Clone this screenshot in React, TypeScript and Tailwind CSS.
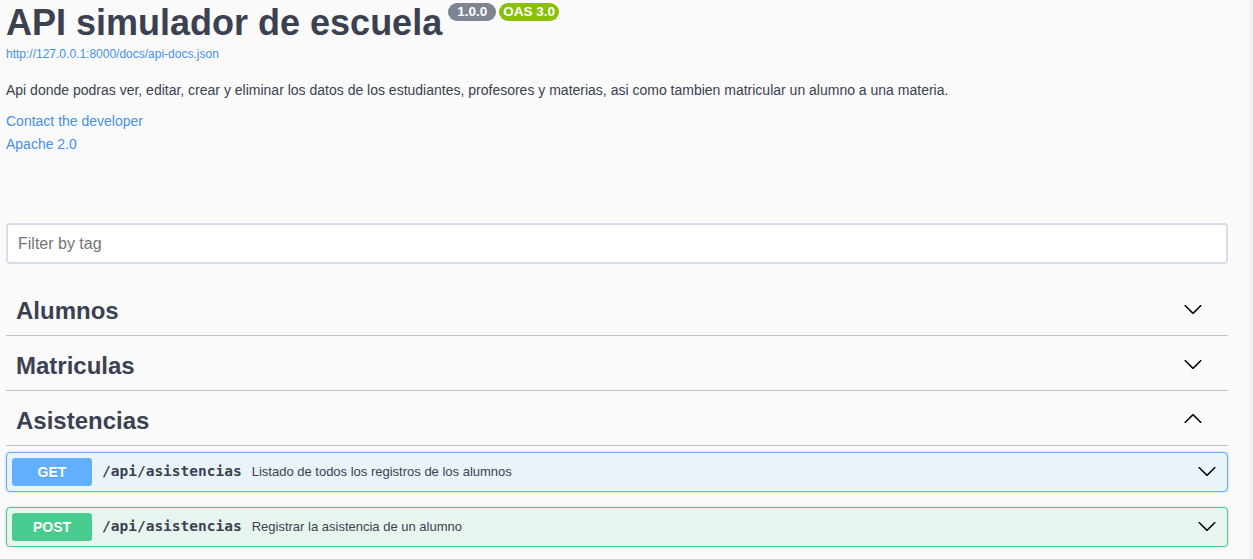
import React from "react";

const Chevron = ({ up = false, className = "" }: { up?: boolean; className?: string }) => (
  <svg
    width="20"
    height="20"
    viewBox="0 0 20 20"
    className={className}
    style={up ? { transform: "rotate(180deg)" } : undefined}
    aria-hidden
  >
    <path
      fill="#000"
      d="M17.418 6.109c.272-.268.709-.268.979 0s.271.701 0 .969l-7.908 7.83c-.27.268-.707.268-.979 0l-7.908-7.83c-.27-.268-.27-.701 0-.969.271-.268.709-.268.979 0L10 13.25l7.418-7.141z"
    />
  </svg>
);

const TagRow = ({ name, open = false }: { name: string; open?: boolean }) => (
  <div className="flex h-[50px] items-center justify-between border-b border-[#c1c3c6] pl-[10px] pr-[25px] mb-[5px]">
    <h3 className="text-[24px] leading-[29px] font-bold text-[#3b4151]">{name}</h3>
    <Chevron up={open} className="-mt-[3px]" />
  </div>
);

const OpRow = ({
  method,
  path,
  desc,
  badge,
  border,
  bg,
}: {
  method: string;
  path: string;
  desc: string;
  badge: string;
  border: string;
  bg: string;
}) => (
  <div
    className={`flex h-[40px] items-center rounded-[4px] border ${border} ${bg} pl-[5px] pr-[10px] shadow-[0_0_3px_rgba(0,0,0,0.19)]`}
  >
    <div
      className={`flex h-[28px] w-[80px] items-center justify-center rounded-[3px] ${badge} text-[14px] font-bold text-white [text-shadow:0_1px_0_rgba(0,0,0,0.1)]`}
    >
      {method}
    </div>
    <span
      className="ml-[10px] text-[14.5px] font-bold text-[#3b4151]"
      style={{ fontFamily: '"DejaVu Sans Mono", monospace' }}
    >
      {path}
    </span>
    <span className="ml-[10px] flex-1 text-[13px] text-[#3b4151]">{desc}</span>
    <Chevron className="-mt-[3px]" />
  </div>
);

export default function App() {
  return (
    <div
      className="flex h-[559px] w-[1253px] overflow-hidden bg-[#fafafa]"
      style={{ fontFamily: '"Liberation Sans", Arial, sans-serif' }}
    >
      <div className="flex flex-1 flex-col pl-[6px] pr-[21px]">
        <div className="flex items-start">
          <h2 className="text-[36px] leading-[46px] font-bold text-[#3b4151]">API simulador de escuela</h2>
          <div className="ml-[6px] mt-[3px] flex gap-[3px]">
            <span className="rounded-full bg-[#7d8492] px-[9px] text-[13.5px] leading-[18px] font-bold text-white">
              1.0.0
            </span>
            <span className="rounded-full bg-[#89bf04] px-[4px] text-[13.5px] leading-[18px] font-bold text-white">
              OAS 3.0
            </span>
          </div>
        </div>
        <a className="text-[12px] leading-[16px] text-[#4990e2]">http://127.0.0.1:8000/docs/api-docs.json</a>
        <p className="mt-[18px] text-[14px] leading-[20px] text-[#3b4151]">
          Api donde podras ver, editar, crear y eliminar los datos de los estudiantes, profesores y materias, asi como tambien matricular un alumno a una materia.
        </p>
        <div className="mt-[11px] flex flex-col gap-[3px]">
          <a className="text-[14px] leading-[20px] text-[#4990e2]">Contact the developer</a>
          <a className="text-[14px] leading-[20px] text-[#4990e2]">Apache 2.0</a>
        </div>
        <div className="mt-[69px] flex h-[41px] items-center rounded-[4px] border-2 border-[#d8dde7] bg-white px-[10px]">
          <span className="text-[16px] text-[#757575]">Filter by tag</span>
        </div>
        <div className="mt-[22px] flex flex-col">
          <TagRow name="Alumnos" />
          <TagRow name="Matriculas" />
          <TagRow name="Asistencias" open />
        </div>
        <div className="mt-[1px] flex flex-col gap-[15px]">
          <OpRow
            method="GET"
            path="/api/asistencias"
            desc="Listado de todos los registros de los alumnos"
            badge="bg-[#61affe]"
            border="border-[#61affe]"
            bg="bg-[#ebf3fa]"
          />
          <OpRow
            method="POST"
            path="/api/asistencias"
            desc="Registrar la asistencia de un alumno"
            badge="bg-[#49cc90]"
            border="border-[#49cc90]"
            bg="bg-[#e8f5ef]"
          />
        </div>
      </div>
      <div className="w-[4px] bg-[#f0f0f0]" />
    </div>
  );
}
